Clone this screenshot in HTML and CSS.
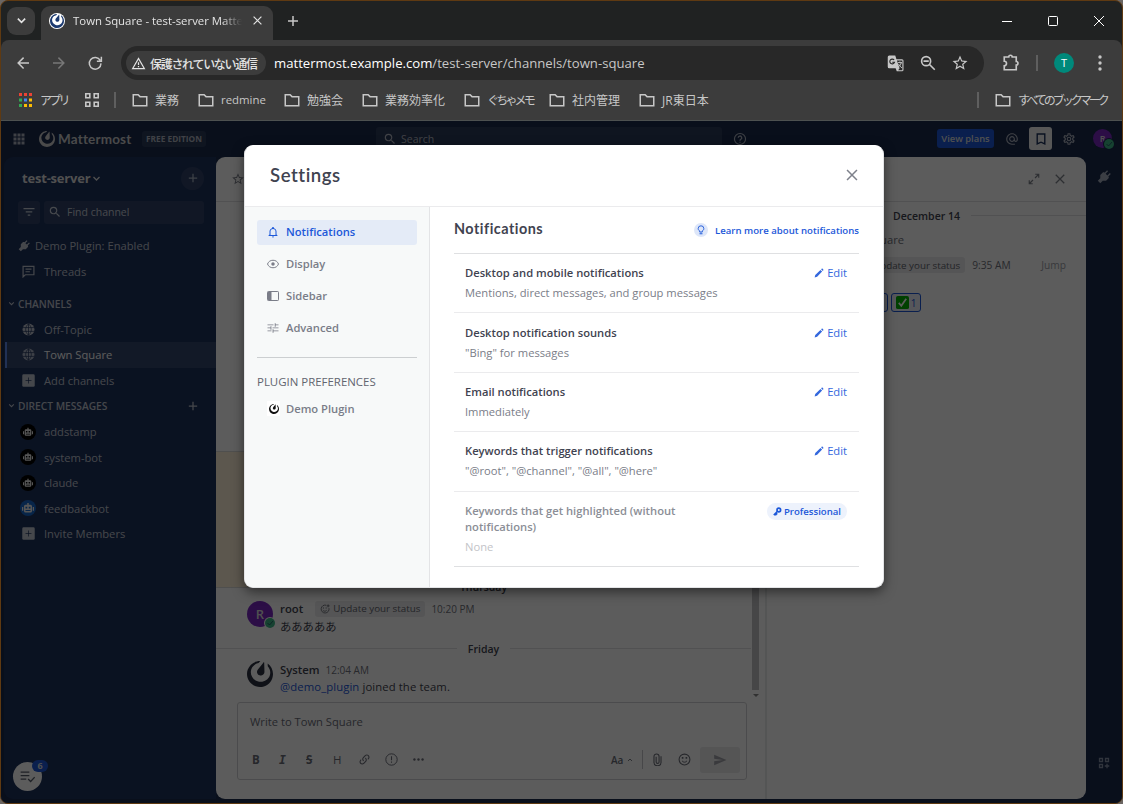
FILE: index.html
```html
<!DOCTYPE html>
<html lang="ja">
<head>
  <meta charset="UTF-8">
  <title>Town Square - test-server Mattermost</title>
  <link rel="stylesheet" href="styles.css">
</head>
<body>

  <!-- icons -->
  <svg class="defs">
    <symbol id="logo" viewBox="0 0 24 24"><path d="M12.081 0C7.048-.034 2.339 3.125.637 8.153c-2.125 6.276 1.24 13.086 7.516 15.21 6.276 2.125 13.086-1.24 15.21-7.516 1.727-5.1-.172-10.552-4.311-13.557l.126 2.547c2.065 2.282 2.88 5.512 1.852 8.549-1.534 4.532-6.594 6.915-11.3 5.321-4.708-1.593-7.28-6.559-5.745-11.092 1.031-3.046 3.655-5.121 6.694-5.67l1.642-1.94A4.87 4.87 0 0 0 12.08 0zm3.528 1.094a.33.33 0 0 0-.236.096c-.145.142-.657.828-.657.828L13.6 3.4l-1.3 1.585-2.232 2.776s-1.024 1.278-.798 2.851c.226 1.574 1.396 2.34 2.304 2.648.907.307 2.302.408 3.438-.704 1.135-1.112 1.098-2.75 1.098-2.75l-.087-3.56-.07-2.05-.047-1.775s.01-.856-.02-1.057a.33.33 0 0 0-.277-.27z"/></symbol>
    <symbol id="chevron" viewBox="0 0 24 24"><path class="ln" stroke-width="3.500" d="M4 8l8 8 8-8"/></symbol>
    <symbol id="close" viewBox="0 0 24 24"><path class="ln" stroke-width="2.600" d="M3.500 3.500l17 17m0-17l-17 17"/></symbol>
    <symbol id="plus" viewBox="0 0 24 24"><path class="ln" stroke-width="3" d="M12 2v20M2 12h20"/></symbol>
    <symbol id="arrow" viewBox="0 0 24 24"><path d="M20 11v2H8l5.500 5.500-1.420 1.420L4.160 12l7.920-7.920L13.500 5.500 8 11h12z"/></symbol>
    <symbol id="reload" viewBox="0 0 24 24"><path class="ln" stroke-width="2" d="M19 8.500A7.800 7.800 0 1 0 20 12.500M20.500 3.500v6h-6"/></symbol>
    <symbol id="warning" viewBox="0 0 24 24"><path class="ln" stroke-width="2" d="M12 4L2.700 20h18.600zM12 10v4.500M12 16v2"/></symbol>
    <symbol id="folder" viewBox="0 0 24 24"><path class="ln" stroke-width="2" d="M3 5h6.500l2.500 2.500h9V19.500H3z"/></symbol>
    <symbol id="grid4" viewBox="0 0 16 16"><path class="ln" stroke-width="1.600" d="M1.800 1.800h4v4h-4zM10.200 1.800h4v4h-4zM1.800 10.200h4v4h-4zM10.200 10.200h4v4h-4z"/></symbol>
    <symbol id="waffle" viewBox="0 0 24 24"><path d="M1 1h6v6H1zM9 1h6v6H9zM17 1h6v6h-6zM1 9h6v6H1zM9 9h6v6H9zM17 9h6v6h-6zM1 17h6v6H1zM9 17h6v6H9zM17 17h6v6h-6z"/></symbol>
    <symbol id="translate" viewBox="0 0 24 24"><path d="M3 2h8l1.600 5H20a2 2 0 0 1 2 2v12a2 2 0 0 1-2 2h-7l-1.500-4H3a2 2 0 0 1-2-2V4a2 2 0 0 1 2-2z"/><path fill="#282828" d="M13.200 8.500H20.500V21.500h-5.700l2-2.500z"/><path fill="none" stroke="#282828" stroke-width="1.500" d="M9.500 8A3.200 3.200 0 1 0 10 11H7"/><path class="ln" stroke-width="1.300" d="M14.500 11.500h5.500M17.200 10v1.500M19 11.500c-.5 3-2.500 5-4 6M15.500 13.500c1 2 3 4 4.500 5"/></symbol>
    <symbol id="zoomout" viewBox="0 0 24 24"><path class="ln" stroke-width="2.200" d="M14 14L21 21M6 9.500h7"/><circle class="ln" stroke-width="2.200" cx="9.500" cy="9.500" r="6"/></symbol>
    <symbol id="star" viewBox="0 0 24 24"><path d="M12,15.390L8.240,17.660L9.230,13.380L5.910,10.500L10.290,10.130L12,6.090L13.710,10.130L18.090,10.500L14.770,13.380L15.760,17.660M22,9.240L14.810,8.630L12,2L9.190,8.630L2,9.240L7.450,13.970L5.820,21L12,17.270L18.180,21L16.540,13.970L22,9.240Z"/></symbol>
    <symbol id="puzzle" viewBox="0 0 24 24"><path class="ln" stroke-width="2.200" d="M3 4h6a2.300 2.300 0 0 1 4.600 0H19v6a2.300 2.300 0 0 1 0 4.600V21H3v-5.300a3 3 0 0 0 0-6z"/></symbol>
    <symbol id="magnify" viewBox="0 0 24 24"><path d="M9.500,3A6.500,6.500 0 0,1 16,9.500C16,11.110 15.410,12.590 14.440,13.730L14.710,14H15.500L20.500,19L19,20.500L14,15.500V14.710L13.730,14.440C12.590,15.410 11.110,16 9.500,16A6.500,6.500 0 0,1 3,9.500A6.500,6.500 0 0,1 9.500,3M9.500,5C7,5 5,7 5,9.500C5,12 7,14 9.500,14C12,14 14,12 14,9.500C14,7 12,5 9.500,5Z"/></symbol>
    <symbol id="help" viewBox="0 0 24 24"><circle class="ln" stroke-width="2" cx="12" cy="12" r="9.500"/><path class="ln" stroke-width="2.200" d="M9 10a3 3 0 1 1 4.500 2.500C12.500 13.200 12 13.500 12 15M12 16.500v2"/></symbol>
    <symbol id="at" viewBox="0 0 24 24"><path d="M12,15C12.810,15 13.500,14.700 14.110,14.110C14.700,13.500 15,12.810 15,12C15,11.190 14.700,10.500 14.110,9.890C13.500,9.300 12.810,9 12,9C11.190,9 10.500,9.300 9.890,9.890C9.300,10.500 9,11.190 9,12C9,12.810 9.300,13.500 9.890,14.110C10.500,14.700 11.190,15 12,15M12,2C14.750,2 17.100,3 19.050,4.950C21,6.900 22,9.250 22,12V13.450C22,14.450 21.650,15.300 21,16C20.300,16.670 19.500,17 18.500,17C17.300,17 16.310,16.500 15.560,15.500C14.560,16.500 13.380,17 12,17C10.630,17 9.450,16.500 8.460,15.540C7.500,14.550 7,13.380 7,12C7,10.630 7.500,9.450 8.460,8.460C9.450,7.500 10.630,7 12,7C13.380,7 14.550,7.500 15.540,8.460C16.500,9.450 17,10.630 17,12V13.450C17,13.860 17.160,14.220 17.460,14.530C17.760,14.840 18.110,15 18.500,15C18.920,15 19.270,14.840 19.570,14.530C19.870,14.220 20,13.860 20,13.450V12C20,9.810 19.230,7.930 17.650,6.350C16.070,4.770 14.190,4 12,4C9.810,4 7.930,4.770 6.350,6.350C4.770,7.930 4,9.810 4,12C4,14.190 4.770,16.070 6.350,17.650C7.930,19.230 9.810,20 12,20H17V22H12C9.250,22 6.900,21 4.950,19.050C3,17.100 2,14.750 2,12C2,9.250 3,6.900 4.950,4.950C6.900,3 9.250,2 12,2Z"/></symbol>
    <symbol id="bookmark" viewBox="0 0 24 24"><path class="ln" stroke-width="2.400" d="M5.500 3.500h13v17l-6.500-3-6.500 3z"/></symbol>
    <symbol id="cog" viewBox="0 0 24 24"><path d="M12,8A4,4 0 0,1 16,12A4,4 0 0,1 12,16A4,4 0 0,1 8,12A4,4 0 0,1 12,8M12,10A2,2 0 0,0 10,12A2,2 0 0,0 12,14A2,2 0 0,0 14,12A2,2 0 0,0 12,10M10,22C9.750,22 9.540,21.820 9.500,21.580L9.130,18.930C8.500,18.680 7.960,18.340 7.440,17.940L4.950,18.950C4.730,19.030 4.460,18.950 4.340,18.730L2.340,15.270C2.210,15.050 2.270,14.780 2.460,14.630L4.570,12.970L4.500,12L4.570,11L2.460,9.370C2.270,9.220 2.210,8.950 2.340,8.730L4.340,5.270C4.460,5.050 4.730,4.960 4.950,5.050L7.440,6.050C7.960,5.660 8.500,5.320 9.130,5.070L9.500,2.420C9.540,2.180 9.750,2 10,2H14C14.250,2 14.460,2.180 14.500,2.420L14.870,5.070C15.500,5.320 16.040,5.660 16.560,6.050L19.050,5.050C19.270,4.960 19.540,5.050 19.660,5.270L21.660,8.730C21.790,8.950 21.730,9.220 21.540,9.370L19.430,11L19.500,12L19.430,13L21.540,14.630C21.730,14.780 21.790,15.050 21.660,15.270L19.660,18.730C19.540,18.950 19.270,19.040 19.050,18.950L16.560,17.950C16.040,18.340 15.500,18.680 14.870,18.930L14.500,21.580C14.460,21.820 14.250,22 14,22H10M11.250,4L10.880,6.610C9.680,6.860 8.620,7.500 7.850,8.390L5.440,7.350L4.690,8.650L6.800,10.200C6.400,11.370 6.400,12.640 6.800,13.800L4.680,15.360L5.430,16.660L7.860,15.620C8.630,16.500 9.680,17.140 10.870,17.380L11.240,20H12.760L13.130,17.390C14.320,17.140 15.370,16.500 16.140,15.620L18.570,16.660L19.320,15.360L17.200,13.810C17.600,12.640 17.600,11.370 17.200,10.200L19.310,8.650L18.560,7.350L16.150,8.390C15.380,7.500 14.320,6.860 13.120,6.620L12.750,4H11.250Z"/></symbol>
    <symbol id="plug" viewBox="0 0 24 24"><path transform="rotate(45 12 12)" d="M16.500 6V0h-2.400v6H9.900V0H7.500v6C6 6 5 7 5 8.500V14l4 4v6h6v-6l4-4V8.500C19 7 18 6 16.500 6z"/></symbol>
    <symbol id="expand" viewBox="0 0 24 24"><path class="ln" stroke-width="2.300" d="M14 10l7-7M14.500 2.500h7v7M10 14l-7 7M2.500 14.500v7h7"/></symbol>
    <symbol id="filter" viewBox="0 0 24 24"><path d="M1 4h22v2.600H1zM5.500 10.500h13v2.600h-13zM9.500 17h5v2.600h-5z"/></symbol>
    <symbol id="threads" viewBox="0 0 24 24"><path class="ln" stroke-width="2.200" d="M2 22V2.500h20V18H6zM6.500 7.500h11M6.500 12.500h8"/></symbol>
    <symbol id="globe" viewBox="0 0 24 24"><circle cx="12" cy="12" r="11"/><path class="cut" d="M1.500 8.500h21M1.500 15.500h21M12 1v22M12 1.500c-7 6-7 15 0 21M12 1.500c7 6 7 15 0 21"/></symbol>
    <symbol id="plusbox" viewBox="0 0 24 24"><rect x="0.500" y="0.500" width="23" height="23" rx="2.500"/><path class="cut" stroke-width="2.400" d="M12 6.500v11M6.500 12h11"/></symbol>
    <symbol id="robot" viewBox="0 0 24 24"><path fill-rule="evenodd" d="M10.500 2h3v3.500H17a3 3 0 0 1 3 3V18a3 3 0 0 1-3 3H7a3 3 0 0 1-3-3V8.500a3 3 0 0 1 3-3h3.500zM0 10h2.500v7.500H0zM21.500 10H24v7.500h-2.500zM7 9.500v3.500h3.500V9.500zM13.500 9.500v3.500H17V9.500zM7 16v2h10v-2z"/></symbol>
    <symbol id="online" viewBox="0 0 24 24"><circle cx="12" cy="12" r="10"/><path class="cut" stroke-width="3" d="M7 12l4 4 7-8"/></symbol>
    <symbol id="bell" viewBox="0 0 24 24"><path d="M10,21H14A2,2 0 0,1 12,23A2,2 0 0,1 10,21M21,19V20H3V19L5,17V11C5,7.900 7.030,5.170 10,4.290C10,4.190 10,4.100 10,4A2,2 0 0,1 12,2A2,2 0 0,1 14,4C14,4.100 14,4.190 14,4.290C16.970,5.170 19,7.900 19,11V17L21,19M17,11A5,5 0 0,0 12,6A5,5 0 0,0 7,11V18H17V11Z"/></symbol>
    <symbol id="eye" viewBox="0 0 24 24"><path class="ln" stroke-width="2" d="M1 12C3 7 7 4.500 12 4.500s9 2.500 11 7.500c-2 5-6 7.500-11 7.500S3 17 1 12z"/><circle cx="12" cy="12" r="3.500"/></symbol>
    <symbol id="dock" viewBox="0 0 24 24"><rect class="ln" stroke-width="2" x="1" y="3" width="22" height="18" rx="1.500"/><path d="M2 4h7v16H2z"/></symbol>
    <symbol id="tune" viewBox="0 0 24 24"><path d="M1 17v1.700h8V17H1M1 5v1.700h12V5H1M13 21.500v-2.800h10V17H13v-2.500h-1.800v7H13M7 8.500V11H1v1.700h6v2.800h1.800v-7H7M23 12.700V11H11v1.700h12M15.500 9.300h1.800V6.700H23V5h-5.700V2.300h-1.800v7z"/></symbol>
    <symbol id="pencil" viewBox="0 0 24 24"><path d="M1.500 22.500l1.500-6L15.500 4.500l4 4L7.500 21zM17 3l1.500-1.300c.8-.6 1.500-.5 2.200.2l1.500 1.500c.7.700.8 1.400.2 2.200L21 7z"/></symbol>
    <symbol id="bulb" viewBox="0 0 24 24"><path class="ln" stroke-width="2.200" d="M9 17v-2.500C6.500 13 5.200 11 5.200 8.700a6.800 6.800 0 0 1 13.600 0C18.800 11 17.500 13 15 14.500V17z"/><path d="M8.500 20h7v2.400h-7z"/></symbol>
    <symbol id="key" viewBox="0 0 24 24"><circle class="ln" stroke-width="4.500" cx="15.500" cy="8" r="4.800"/><path class="ln" stroke-width="4" d="M12 11.500L2 21.500M3 20.500h6M7.500 16.500l4 3"/></symbol>
    <symbol id="smile" viewBox="0 0 24 24"><circle class="ln" stroke-width="2" cx="12" cy="12" r="10"/><path d="M7 7.500h3v3H7zM14 7.500h3v3h-3z"/><path class="ln" stroke-width="1.800" d="M7.500 14.500c2 3.300 7 3.300 9 0"/></symbol>
    <symbol id="smileplus" viewBox="0 0 24 24"><path class="ln" stroke-width="2" d="M15 3A9.500 9.500 0 1 0 21.500 10M19.500 1v7M16 4.500h7M7 15c2 3 7 3 9 0"/><path d="M7 8.500h2.500V11H7zM13.500 8.500H16V11h-2.500z"/></symbol>
    <symbol id="link" viewBox="0 0 24 24"><path d="M10.590,13.410C11,13.800 11,14.440 10.590,14.830C10.200,15.220 9.560,15.220 9.170,14.830C7.220,12.880 7.220,9.710 9.170,7.760V7.760L12.710,4.220C14.660,2.270 17.830,2.270 19.780,4.220C21.730,6.170 21.730,9.340 19.780,11.290L18.290,12.780C18.300,11.960 18.170,11.140 17.890,10.360L18.360,9.880C19.540,8.710 19.540,6.810 18.360,5.640C17.190,4.460 15.290,4.460 14.120,5.640L10.590,9.170C9.410,10.340 9.410,12.240 10.590,13.410M13.410,9.170C13.800,8.780 14.440,8.780 14.830,9.170C16.780,11.120 16.780,14.290 14.830,16.240V16.240L11.290,19.780C9.340,21.730 6.170,21.730 4.220,19.780C2.270,17.830 2.270,14.660 4.220,12.710L5.710,11.220C5.700,12.040 5.830,12.860 6.110,13.650L5.640,14.120C4.460,15.290 4.460,17.190 5.640,18.360C6.810,19.540 8.710,19.540 9.880,18.360L13.410,14.830C14.590,13.660 14.590,11.760 13.410,10.590C13,10.200 13,9.560 13.410,9.170Z"/></symbol>
    <symbol id="alert" viewBox="0 0 24 24"><circle class="ln" stroke-width="1.800" cx="12" cy="12" r="10.500"/><path class="ln" stroke-width="2" d="M12 6v7.500M12 15.500v2.300"/></symbol>
    <symbol id="clip" viewBox="0 0 24 24"><path class="ln" stroke-width="2" d="M18.500 6v11a6.500 6.500 0 0 1-13 0V6.500a4.700 4.700 0 0 1 9.400 0V16.500a2.700 2.700 0 0 1-5.400 0V7"/></symbol>
    <symbol id="send" viewBox="0 0 24 24"><path d="M2,21L23,12L2,3V10L17,12L2,14V21Z"/></symbol>
    <symbol id="dots" viewBox="0 0 24 24"><circle cx="4.500" cy="12" r="2.200"/><circle cx="12" cy="12" r="2.200"/><circle cx="19.500" cy="12" r="2.200"/></symbol>
    <symbol id="checklist" viewBox="0 0 24 24"><path class="ln" stroke-width="2" d="M1 5h14M1 10.500h14M1 16h9M13 16l4 4 6.500-7"/></symbol>
    <symbol id="gridplus" viewBox="0 0 24 24"><path class="ln" stroke-width="2.600" d="M3 3h6v6H3zM15 3h6v6h-6zM3 15h6v6H3zM18 13.500v9M13.500 18h9"/></symbol>
  </svg>

  <div class="window">
    <div class="tabstrip">
      <button class="tab-search"><svg class="i11"><use href="#chevron"/></svg></button>
      <div class="tab">
        <span class="favicon"><svg><use href="#logo"/></svg></span>
        <span class="tab-title">Town Square - test-server Matte</span>
        <svg class="i11"><use href="#close"/></svg>
      </div>
      <svg class="newtab" viewBox="0 0 12 12"><path class="ln" stroke-width="1.500" d="M6 1v10M1 6h10"/></svg>
      <svg class="winbtns" viewBox="0 0 110 14"><path d="M3 7.500h10"/><rect x="49.500" y="2.500" width="9" height="9" rx="1"/><path d="M95 2l10 10m0-10L95 12"/></svg>
    </div>

    <div class="toolbar">
      <svg class="nav-back"><use href="#arrow"/></svg>
      <svg class="nav-fwd"><use href="#arrow"/></svg>
      <svg class="nav-reload"><use href="#reload"/></svg>
      <div class="omnibox">
        <span class="insecure"><svg><use href="#warning"/></svg><span>保護されていない通信</span></span>
        <span class="url"><b>mattermost.example.com</b>/test-server/channels/town-square</span>
        <svg class="i18"><use href="#translate"/></svg>
        <svg class="i18"><use href="#zoomout"/></svg>
        <svg class="i18"><use href="#star"/></svg>
      </div>
      <svg class="ext"><use href="#puzzle"/></svg>
      <span class="sep"></span>
      <span class="profile">T</span>
      <svg class="kebab" viewBox="0 0 4 16"><circle cx="2" cy="2" r="1.700"/><circle cx="2" cy="8" r="1.700"/><circle cx="2" cy="14" r="1.700"/></svg>
    </div>

    <div class="bookmarks">
      <svg class="apps" viewBox="0 0 13 14"><path fill="#ea4335" d="M0 0h3v3H0zM5 0h3v3H5zM10 0h3v3h-3z"/><path fill="#34a853" d="M0 5.500h3v3H0zM0 11h3v3H0z"/><path fill="#4285f4" d="M5 5.500h3v3H5z"/><path fill="#fbbc04" d="M10 5.500h3v3h-3zM5 11h3v3H5zM10 11h3v3h-3z"/></svg>
      <span class="apps-label">アプリ</span>
      <svg class="grid4"><use href="#grid4"/></svg>
      <span class="sep"></span>
      <span class="bm w1"><svg><use href="#folder"/></svg>業務</span>
      <span class="bm w2"><svg><use href="#folder"/></svg><span class="latin">redmine</span></span>
      <span class="bm w3"><svg><use href="#folder"/></svg>勉強会</span>
      <span class="bm w4"><svg><use href="#folder"/></svg>業務効率化</span>
      <span class="bm w5"><svg><use href="#folder"/></svg><span class="kana">ぐちゃメモ</span></span>
      <span class="bm w6"><svg><use href="#folder"/></svg>社内管理</span>
      <span class="bm w7"><svg><use href="#folder"/></svg>JR東日本</span>
      <span class="sep"></span>
      <span class="bm all"><svg><use href="#folder"/></svg><span class="kana">すべてのブックマーク</span></span>
    </div>

    <div class="app">
      <header class="global">
        <svg class="g-waffle"><use href="#waffle"/></svg>
        <svg class="g-logo"><use href="#logo"/></svg>
        <span class="g-name">Mattermost</span>
        <span class="g-edition">FREE EDITION</span>
        <div class="g-search"><svg><use href="#magnify"/></svg>Search</div>
        <svg class="g-help"><use href="#help"/></svg>
        <button class="g-plans">View plans</button>
        <svg class="g-at"><use href="#at"/></svg>
        <span class="g-saved"><svg><use href="#bookmark"/></svg></span>
        <svg class="g-cog"><use href="#cog"/></svg>
        <span class="avatar g-avatar">R<svg><use href="#online"/></svg></span>
      </header>

      <div class="main">
        <aside class="sidebar">
          <div class="team"><span>test-server</span><svg><use href="#chevron"/></svg><i><svg><use href="#plus"/></svg></i></div>
          <div class="find">
            <span class="find-filter"><svg><use href="#filter"/></svg></span>
            <span class="find-box"><svg><use href="#magnify"/></svg>Find channel</span>
          </div>
          <div class="row demo"><svg><use href="#plug"/></svg>Demo Plugin: Enabled</div>
          <div class="row threads"><svg><use href="#threads"/></svg>Threads</div>
          <div class="group"><svg><use href="#chevron"/></svg>CHANNELS</div>
          <div class="row"><svg><use href="#globe"/></svg>Off-Topic</div>
          <div class="row active"><svg><use href="#globe"/></svg>Town Square</div>
          <div class="row"><svg><use href="#plusbox"/></svg>Add channels</div>
          <div class="group"><svg><use href="#chevron"/></svg>DIRECT MESSAGES<svg class="group-add"><use href="#plus"/></svg></div>
          <div class="row"><span class="bot"><svg><use href="#robot"/></svg></span>addstamp</div>
          <div class="row"><span class="bot"><svg><use href="#robot"/></svg></span>system-bot</div>
          <div class="row"><span class="bot"><svg><use href="#robot"/></svg></span>claude</div>
          <div class="row"><span class="bot blue"><svg><use href="#robot"/></svg></span>feedbackbot</div>
          <div class="row"><svg><use href="#plusbox"/></svg>Invite Members</div>
          <div class="tasks"><svg><use href="#checklist"/></svg><b>6</b></div>
        </aside>

        <div class="content">
          <section class="channel">
            <div class="ch-head"><svg><use href="#star"/></svg></div>
            <div class="posts">
              <div class="post-list">
                <div class="old"></div>
                <div class="pinned"></div>
                <div class="day thursday"><span>Thursday</span></div>
                <div class="post">
                  <span class="avatar">R<svg><use href="#online"/></svg></span>
                  <div>
                    <p class="meta"><b>root</b><span class="status"><svg><use href="#smileplus"/></svg>Update your status</span><time>10:20 PM</time></p>
                    <p class="jp">あああああ</p>
                  </div>
                </div>
                <div class="day"><span>Friday</span></div>
                <div class="post system">
                  <svg class="sys-logo"><use href="#logo"/></svg>
                  <div>
                    <p class="meta"><b>System</b><time>12:04 AM</time></p>
                    <p><a>@demo_plugin</a> joined the team.</p>
                  </div>
                </div>
              </div>
              <div class="scroll"><span></span><i></i></div>
            </div>
            <div class="editor">
              <p>Write to Town Square</p>
              <div class="tools">
                <b>B</b><b class="it">I</b><b class="st">S</b><b class="hd">H</b>
                <svg><use href="#link"/></svg>
                <svg><use href="#alert"/></svg>
                <svg><use href="#dots"/></svg>
                <span class="aa">Aa<svg><use href="#chevron"/></svg></span>
                <svg class="t-clip"><use href="#clip"/></svg>
                <svg class="t-smile"><use href="#smile"/></svg>
                <span class="t-send"><svg><use href="#send"/></svg></span>
              </div>
            </div>
          </section>

          <section class="rhs">
            <div class="rhs-head"><svg><use href="#expand"/></svg><svg><use href="#close"/></svg></div>
            <div class="day rhs-day"><span>December 14</span></div>
            <p class="rhs-channel">Town Square</p>
            <p class="meta rhs-meta"><span class="status">Update your status</span><time>9:35 AM</time><em>Jump</em></p>
            <div class="reactions">
              <span class="react"></span>
              <span class="react"><svg viewBox="0 0 14 14"><rect width="14" height="14" rx="2" fill="#00b200"/><path fill="none" stroke="#fff" stroke-width="1.900" d="M3 7.500l2.700 3L11 3"/></svg>1</span>
            </div>
          </section>
        </div>

        <aside class="appbar">
          <svg><use href="#plug"/></svg>
          <svg class="market"><use href="#gridplus"/></svg>
        </aside>
      </div>

      <div class="backdrop"></div>
    </div>
  </div>

  <div class="modal">
    <div class="modal-head"><h1>Settings</h1><svg><use href="#close"/></svg></div>
    <div class="modal-body">
      <nav class="tabs">
        <a class="selected"><svg><use href="#bell"/></svg>Notifications</a>
        <a><svg><use href="#eye"/></svg>Display</a>
        <a><svg><use href="#dock"/></svg>Sidebar</a>
        <a><svg><use href="#tune"/></svg>Advanced</a>
        <hr>
        <h3>PLUGIN PREFERENCES</h3>
        <a><span class="plugin-icon"><svg><use href="#logo"/></svg></span>Demo Plugin</a>
      </nav>
      <div class="panel">
        <div class="panel-head"><h2>Notifications</h2><span class="bulb"><svg><use href="#bulb"/></svg></span><a>Learn more about notifications</a></div>
        <div class="setting">
          <div><h4>Desktop and mobile notifications</h4><p>Mentions, direct messages, and group messages</p></div>
          <button><svg><use href="#pencil"/></svg>Edit</button>
        </div>
        <div class="setting tall">
          <div><h4>Desktop notification sounds</h4><p>"Bing" for messages</p></div>
          <button><svg><use href="#pencil"/></svg>Edit</button>
        </div>
        <div class="setting">
          <div><h4>Email notifications</h4><p>Immediately</p></div>
          <button><svg><use href="#pencil"/></svg>Edit</button>
        </div>
        <div class="setting keywords">
          <div><h4>Keywords that trigger notifications</h4><p>"@root", "@channel", "@all", "@here"</p></div>
          <button><svg><use href="#pencil"/></svg>Edit</button>
        </div>
        <div class="setting locked">
          <div><h4>Keywords that get highlighted (without notifications)</h4><p>None</p></div>
          <span class="pro"><svg><use href="#key"/></svg>Professional</span>
        </div>
      </div>
    </div>
  </div>

</body>
</html>
```
FILE: styles.css
```css
* {
  box-sizing: border-box;
}
body {
  margin: 0;
  width: 1123px;
  height: 804px;
  overflow: hidden;
  background: #6b6663;
  font-family: "Open Sans", "Noto Sans CJK JP", sans-serif;
  font-size: 11.2px;
  color: #3f4350;
}
p, h1, h2, h3, h4 {
  margin: 0;
}
svg {
  fill: currentColor;
  flex: none;
  display: block;
}
button {
  border: 0;
  padding: 0;
  background: none;
  font: inherit;
  color: inherit;
}
.defs {
  position: absolute;
  width: 0;
  height: 0;
}
.ln {
  fill: none;
  stroke: currentColor;
}
.cut {
  fill: none;
  stroke: #1e325c;
  stroke-width: 1.3;
}
.i11 { width: 11px; height: 11px; }
.i18 { width: 18px; height: 18px; }

/* browser window */
.window {
  width: 1123px;
  height: 804px;
  display: flex;
  flex-direction: column;
  border: 1px solid #5f3a12;
  border-radius: 8px;
  overflow: hidden;
  background: #202222;
  color: #c7c7c7;
}
.tabstrip {
  height: 39px;
  flex: none;
  display: flex;
  align-items: center;
  padding-left: 6px;
}
.tab-search {
  width: 28px;
  height: 28px;
  border-radius: 9px;
  background: #3c3c3c;
  display: grid;
  place-items: center;
  color: #e3e3e3;
}
.tab {
  width: 232px;
  height: 34px;
  margin: 5px 0 0 6px;
  padding: 0 0 5px 8px;
  border-radius: 9px 9px 0 0;
  background: #3c3c3c;
  display: flex;
  align-items: center;
  color: #e3e3e3;
}
.favicon {
  width: 16px;
  height: 16px;
  flex: none;
  border-radius: 50%;
  background: #fff;
  color: #1c3a70;
  display: grid;
  place-items: center;
}
.favicon svg {
  width: 14px;
  height: 14px;
}
.tab-title {
  width: 169px;
  flex: none;
  margin: 0 10px 0 8px;
  font-size: 11.4px;
  white-space: nowrap;
  overflow: hidden;
  -webkit-mask-image: linear-gradient(90deg, #000 88%, transparent);
}
.newtab {
  width: 12px;
  height: 12px;
  margin-left: 14px;
}
.winbtns {
  width: 110px;
  height: 14px;
  margin-left: auto;
  margin-right: 13px;
  fill: none;
  stroke: #fff;
}
.toolbar {
  height: 46px;
  flex: none;
  display: flex;
  align-items: center;
  padding: 0 20px 0 13px;
  background: #3c3c3c;
  border-radius: 8px 8px 0 0;
}
.toolbar .nav-back, .toolbar .nav-fwd, .toolbar .nav-reload {
  width: 18px;
  height: 18px;
  margin-right: 18px;
}
.toolbar .nav-fwd {
  transform: scaleX(-1);
  color: #777;
}
.omnibox {
  width: 863px;
  flex: none;
  height: 34px;
  margin-left: -1px;
  padding: 0 15px 0 5px;
  border-radius: 17px;
  background: #282828;
  display: flex;
  align-items: center;
  gap: 14px;
}
.insecure {
  width: 140px;
  height: 24px;
  padding-left: 5px;
  border-radius: 12px;
  background: #3c3c3c;
  color: #e3e3e3;
  display: flex;
  align-items: center;
  gap: 4px;
  font-size: 12px;
  font-weight: 500;
  font-family: "Noto Sans CJK JP", sans-serif;
  white-space: nowrap;
}
.insecure span {
  letter-spacing: -1.3px;
}
.insecure svg {
  width: 15px;
  height: 15px;
}
.url {
  flex: 1;
  margin-left: -6px;
  font-size: 13.15px;
}
.url b {
  font-weight: 400;
  color: #fff;
}
.ext {
  width: 18px;
  height: 18px;
  margin: 0 16px 0 18px;
}
.sep {
  width: 2px;
  height: 16px;
  background: #5f5f5f;
}
.profile {
  width: 20px;
  height: 20px;
  flex: none;
  margin: 0 24px 0 16px;
  border-radius: 50%;
  background: #00897b;
  color: #fff;
  text-align: center;
  line-height: 20px;
  font-size: 11px;
}
.kebab {
  width: 4px;
  height: 16px;
}
.bookmarks {
  height: 35px;
  flex: none;
  display: flex;
  align-items: center;
  padding: 0 0 7px 18px;
  background: #3c3c3c;
  border-bottom: 1px solid #4d5150;
  font-size: 12px;
  font-family: "Open Sans", "Noto Sans CJK JP", sans-serif;
  white-space: nowrap;
}
.apps {
  width: 13px;
  height: 14px;
}
.apps-label {
  width: 28px;
  margin: 0 16px 0 8px;
  letter-spacing: -2.7px;
}
.grid4 {
  width: 16px;
  height: 16px;
  margin-right: 14px;
}
.bm {
  display: flex;
  align-items: center;
  gap: 6px;
}
.bm svg {
  width: 18px;
  height: 18px;
}
.bm .latin { font-size: 11.4px; }
.grid4 + .sep { margin-right: 15px; }
.w1 { width: 66px; }
.w2 { width: 86px; }
.w3 { width: 78px; }
.w4 { width: 102px; }
.w5 { width: 85px; }
.w6 { width: 90px; }
.w7 { flex: 1; }
.bm .kana { letter-spacing: -2.8px; }
.all {
  width: 128px;
  margin-left: 15px;
}
.all .kana { letter-spacing: -3px; }

/* mattermost */
.app {
  flex: 1;
  display: flex;
  flex-direction: column;
  position: relative;
  background: #192a4d;
}
.backdrop {
  position: absolute;
  inset: 0;
  background: rgba(0, 0, 0, 0.64);
}
.global {
  height: 36px;
  flex: none;
  display: flex;
  align-items: center;
  padding: 0 10px 1px 12px;
  color: rgba(255, 255, 255, 0.64);
}
.g-waffle { width: 12px; height: 12px; margin-right: 14px; }
.g-logo { width: 16px; height: 16px; margin-right: 3px; color: #ccc; }
.g-name {
  width: 75px;
  margin-right: 9px;
  font: 700 13.5px Lato, sans-serif;
  letter-spacing: 0.18px;
  color: #ccc;
}
.g-edition {
  width: 64px;
  height: 16px;
  border-radius: 3px;
  background: rgba(255, 255, 255, 0.08);
  font-size: 8.3px;
  font-weight: 700;
  line-height: 16px;
  text-align: center;
}
.g-search {
  width: 346px;
  height: 24px;
  margin: 0 11px 0 170px;
  padding-left: 7px;
  border-radius: 3px;
  background: rgba(255, 255, 255, 0.08);
  display: flex;
  align-items: center;
  gap: 4px;
  font-size: 10.5px;
}
.g-search svg, .find-box svg, .g-help {
  width: 14px;
  height: 14px;
}
.g-plans {
  width: 57px;
  height: 19px;
  margin-left: auto;
  border-radius: 3px;
  background: #1c58d9;
  color: #ddd;
  font-size: 9.4px;
  font-weight: 600;
}
.g-at { width: 14px; height: 14px; margin: 0 10px 0 11px; }
.g-saved {
  width: 23px;
  height: 23px;
  border-radius: 3px;
  background: #f2f2f2;
  color: #1e325c;
  display: grid;
  place-items: center;
}
.g-saved svg, .g-cog { width: 14px; height: 14px; }
.g-cog { margin: 0 17px 0 10px; }
.avatar {
  width: 26px;
  height: 26px;
  flex: none;
  border-radius: 50%;
  background: #7a29c2;
  color: #ddd;
  text-align: center;
  font-size: 13px;
  font-weight: 600;
  line-height: 26px;
  position: relative;
}
.avatar svg {
  position: absolute;
  right: -3px;
  bottom: -2px;
  width: 12px;
  height: 12px;
  color: #3db887;
  background: #fff;
  border-radius: 50%;
}
.avatar.g-avatar {
  width: 19px;
  height: 19px;
  font-size: 9px;
  line-height: 19px;
}
.g-avatar svg {
  background: #192a4d;
}
.main {
  flex: 1;
  display: flex;
  padding: 0 0 4px 3px;
}
.sidebar {
  width: 212px;
  flex: none;
  display: flex;
  flex-direction: column;
  background: #1e325c;
  border-radius: 9px 0 0 9px;
  color: rgba(255, 255, 255, 0.72);
}
.team {
  height: 41px;
  flex: none;
  display: flex;
  align-items: center;
  padding: 1px 12px 0 18px;
  font-weight: 700;
  font-size: 13px;
  letter-spacing: -0.2px;
  color: #ddd;
}
.team > svg { width: 9px; height: 9px; margin-left: 2px; }
.team i {
  width: 23px;
  height: 23px;
  margin-left: auto;
  border-radius: 50%;
  background: rgba(255, 255, 255, 0.08);
  display: grid;
  place-items: center;
  color: #aab2c2;
}
.team i svg { width: 10px; height: 10px; }
.find {
  height: 23px;
  flex: none;
  display: flex;
  gap: 4px;
  margin: 3px 12px 9px 14px;
  font-size: 10.5px;
}
.find span {
  padding-bottom: 1px;
  border-radius: 3px;
  background: rgba(255, 255, 255, 0.08);
  display: flex;
  align-items: center;
}
.find-filter {
  width: 22px;
  justify-content: center;
}
.find-filter svg { width: 12px; height: 12px; }
.find-box {
  flex: 1;
  padding-left: 4px;
  gap: 5px;
}
.row, .group {
  height: 25.6px;
  flex: none;
  display: flex;
  align-items: center;
}
.row {
  padding-left: 18px;
  gap: 9px;
}
.row > svg {
  width: 13px;
  height: 13px;
}
.row.demo { padding-left: 14px; gap: 5px; }
.row.demo > svg { width: 12px; height: 12px; }
.threads { margin-bottom: 6.6px; }
.active {
  padding-left: 15px;
  border-left: 2px solid #5d89ea;
  background: rgba(255, 255, 255, 0.1);
  margin-left: 1px;
  color: #fff;
}
.active > svg { color: #a9b2c4; }
.group {
  padding: 0 18px 0 4px;
  gap: 3px;
  font-size: 10.2px;
  font-weight: 600;
}
.group svg { width: 7px; height: 7px; }
.group .group-add {
  width: 10px;
  height: 10px;
  margin-left: auto;
}
.bot {
  width: 16px;
  height: 16px;
  margin: 0 -1px 0 -2px;
  border-radius: 50%;
  background: #000;
  display: grid;
  place-items: center;
  color: #eee;
}
.bot svg { width: 10px; height: 10px; }
.blue { background: #1668c9; }
.blue svg { width: 12px; height: 12px; }
.tasks {
  width: 29px;
  height: 29px;
  margin: auto 0 8px 9px;
  border-radius: 50%;
  background: #fff;
  color: #555b69;
  display: grid;
  place-items: center;
  position: relative;
}
.tasks svg { width: 15px; height: 15px; }
.tasks b {
  position: absolute;
  left: 19px;
  top: -2px;
  width: 16px;
  height: 12px;
  border-radius: 6px;
  background: #1c58d9;
  color: #ddd;
  font-size: 9px;
  line-height: 12px;
  text-align: center;
}
.content {
  width: 870px;
  display: flex;
  background: #fff;
  border-radius: 9px;
  overflow: hidden;
  color: #3f4350;
}
.channel {
  width: 549px;
  display: flex;
  flex-direction: column;
}
.ch-head, .rhs-head {
  height: 45px;
  flex: none;
  border-bottom: 1px solid #dfe0e2;
  display: flex;
  align-items: center;
  padding-left: 15px;
  color: #7e828c;
}
.ch-head svg { width: 14px; height: 14px; }
.posts {
  height: 500px;
  flex: none;
  display: flex;
}
.post-list {
  width: 535px;
}
.old { height: 249px; }
.pinned {
  height: 137px;
  background: #fff1d8;
  border: solid #dcdcd8;
  border-width: 1px 0;
}
.day {
  height: 13px;
  display: flex;
  align-items: center;
  gap: 11px;
  font-size: 10.5px;
  font-weight: 600;
}
.day::before, .day::after {
  content: "";
  flex: 1;
  height: 1px;
  background: #dfe0e2;
}
.thursday { margin-top: -8px; margin-bottom: 7px; }
.thursday::before, .thursday::after { background: none; }
.post {
  height: 42px;
  display: flex;
  gap: 7px;
  padding-left: 31px;
  line-height: 16px;
}
.post .avatar { margin-top: 1px; }
.post p { height: 18px; white-space: nowrap; font-size: 11.3px; }
.post .jp { line-height: 18px; }
.meta {
  display: flex;
  align-items: center;
}
.post .meta b { font-weight: 600; }
.meta time {
  font-size: 10px;
  color: #6f727c;
  margin-left: 6px;
}
.status {
  height: 16px;
  margin-left: 12px;
  padding: 0 5px;
  border-radius: 3px;
  background: #ececed;
  display: flex;
  align-items: center;
  gap: 3px;
  font-size: 9.8px;
  color: #62656f;
}
.status svg { width: 10px; height: 10px; }
.system { padding-top: 6px; }
.system p + p { letter-spacing: 0.1px; }
.sys-logo { width: 26px; height: 26px; margin-top: 0; color: #2b3040; }
.post a { color: #1c58d9; }
.scroll {
  width: 9px;
  display: flex;
  flex-direction: column;
  align-items: center;
}
.scroll span {
  width: 7px;
  height: 488px;
  background: #c1c2c6;
}
.scroll i {
  margin-top: 4px;
  border: 3px solid transparent;
  border-top-color: #888;
}
.editor {
  width: 510px;
  height: 78px;
  margin-left: 21px;
  border: 1px solid #d0d1d4;
  border-radius: 3px;
  color: #6a6d78;
}
.editor p { padding: 11px 12px; line-height: 16px; font-size: 11.2px; }
.tools {
  height: 26px;
  margin-top: 6px;
  padding: 0 6px 1px 12px;
  display: flex;
  align-items: center;
}
.tools > b { width: 27px; flex: none; padding-left: 2px; font-size: 11.5px; font-weight: 700; }
.tools .it { font-style: italic; font-family: "DejaVu Sans Mono", monospace; }
.tools .st { text-decoration: line-through; }
.tools .hd { font-weight: 400; }
.tools > svg { width: 13px; height: 13px; margin-right: 14px; }
.aa {
  flex: none;
  display: flex;
  align-items: center;
  gap: 4px;
  height: 19px;
  margin-left: 172px;
  padding-right: 9px;
  border-right: 1px solid #c5c6ca;
  font-size: 10px;
  font-weight: 600;
}
.aa svg { width: 6px; height: 6px; transform: scaleY(-1); }
.tools .t-clip { margin-left: 8px; }
.tools .t-smile { margin-right: 0; }
.t-send {
  width: 40px;
  height: 26px;
  flex: none;
  margin-left: auto;
  border-radius: 3px;
  background: #ebebec;
  color: #a0a2a8;
  display: grid;
  place-items: center;
}
.t-send svg { width: 14px; height: 14px; }
.rhs {
  flex: 1;
  border-left: 2px solid #e9eaeb;
}
.rhs-head {
  justify-content: flex-end;
  gap: 14px;
  padding-right: 20px;
}
.rhs-head svg { width: 12px; height: 12px; }
.rhs-day { margin-top: 7px; }
.rhs-channel {
  width: 137px;
  margin-top: 10px;
  text-align: right;
  line-height: 16px;
  color: #6f727c;
}
.rhs-meta {
  margin-top: 9px;
  padding-left: 89px;
}
.rhs-meta time { font-size: 10.2px; margin-left: 7px; }
.rhs-meta em {
  margin-left: auto;
  padding-right: 20px;
  font-style: normal;
  font-size: 10.2px;
  color: #9c9ea6;
}
.reactions {
  display: flex;
  gap: 3px;
  margin: 20px 0 0 91px;
}
.react {
  width: 30px;
  height: 19px;
  border: 1px solid #1c58d9;
  border-radius: 3px;
  background: #edf2fc;
  display: flex;
  align-items: center;
  justify-content: center;
  gap: 2px;
  font-size: 10px;
  color: #1c58d9;
}
.react svg { width: 13px; height: 13px; }
.appbar {
  flex: 1;
  display: flex;
  flex-direction: column;
  align-items: center;
  justify-content: space-between;
  padding: 13px 0 30px;
  color: #a5adbc;
}
.appbar svg { width: 14px; height: 14px; }
.appbar .market { width: 12px; height: 12px; color: #8893aa; }

/* settings modal */
.modal {
  position: absolute;
  left: 244px;
  top: 145px;
  width: 640px;
  height: 443px;
  border: 1px solid #e3e4e6;
  border-top-color: #fff;
  border-radius: 9px;
  background: #fff;
  box-shadow: 0 4px 12px rgba(0, 0, 0, 0.5);
  display: flex;
  flex-direction: column;
  overflow: hidden;
}
.modal-head {
  height: 61px;
  flex: none;
  display: flex;
  align-items: center;
  justify-content: space-between;
  padding: 0 25px 3px;
  border-bottom: 1px solid #ebebed;
}
.modal-head h1 {
  font: 600 18.6px Lato, sans-serif;
  letter-spacing: 0.55px;
}
.modal-head svg { width: 14px; height: 14px; margin-right: -1px; color: #7e818b; }
.modal-body {
  flex: 1;
  display: flex;
}
.tabs {
  width: 185px;
  padding: 13px 12px;
  background: #f7f9f9;
  border-right: 1px solid #e3e4e6;
}
.tabs a {
  height: 25px;
  margin-bottom: 7px;
  padding: 0 0 2px 10px;
  border-radius: 3px;
  display: flex;
  align-items: center;
  gap: 7px;
  font-weight: 600;
  color: #7a7d88;
}
.tabs svg { width: 12px; height: 12px; }
.tabs a.selected {
  background: #e4ebf7;
  color: #1c58d9;
}
.tabs hr {
  margin: 16px 0;
  border: 0;
  height: 1px;
  background: #cccfd1;
}
.tabs h3 {
  margin-bottom: 7px;
  font-size: 11.45px;
  font-weight: 400;
  line-height: 16px;
  color: #62656f;
}
.plugin-icon {
  width: 13px;
  height: 15px;
  margin-right: -1px;
  background: #fff;
  color: #111;
  display: grid;
  place-items: center;
}
.plugin-icon svg { width: 10px; height: 10px; }
.panel {
  flex: 1;
  padding: 0 24px;
}
.panel-head {
  height: 47px;
  display: flex;
  align-items: center;
  border-bottom: 1px solid #dfe0e2;
}
.panel-head h2 {
  flex: 1;
  padding-bottom: 3px;
  font: 700 14.4px Lato, sans-serif;
  letter-spacing: 0.5px;
}
.bulb {
  width: 14px;
  height: 14px;
  margin-right: 7px;
  border-radius: 50%;
  background: #dde6f9;
  display: grid;
  place-items: center;
}
.bulb svg { width: 10px; height: 10px; }
.panel-head a, .bulb { color: #1c58d9; }
.panel-head a { font-size: 9.6px; font-weight: 600; }
.setting {
  height: 59px;
  padding: 11px 11px 0;
  display: flex;
  justify-content: space-between;
  align-items: flex-start;
  border-bottom: 1px solid #ebebed;
  line-height: 16px;
}
.setting.tall { height: 60px; padding-top: 12px; }
.setting.keywords { height: 60px; }
.setting div { max-width: 250px; }
.setting p { white-space: nowrap; }
.setting h4 {
  margin-bottom: 4px;
  font-size: 11.2px;
  font-weight: 600;
}
.setting p { color: #7a7d88; }
.setting button {
  display: flex;
  align-items: center;
  gap: 3px;
  margin-right: 1px;
  color: #3468dd;
}
.setting button svg { width: 10px; height: 10px; }
.setting.locked {
  height: 75px;
  border-bottom-color: #dfe0e2;
}
.locked h4 { color: #8b8e96; }
.locked p { color: #c3c4c8; }
.pro {
  width: 80px;
  height: 17px;
  margin-right: 1px;
  border-radius: 9px;
  background: #edf2fc;
  color: #1c58d9;
  display: flex;
  align-items: center;
  justify-content: center;
  gap: 2px;
  font-size: 9.6px;
  font-weight: 600;
}
.pro svg { width: 9px; height: 9px; }
```
